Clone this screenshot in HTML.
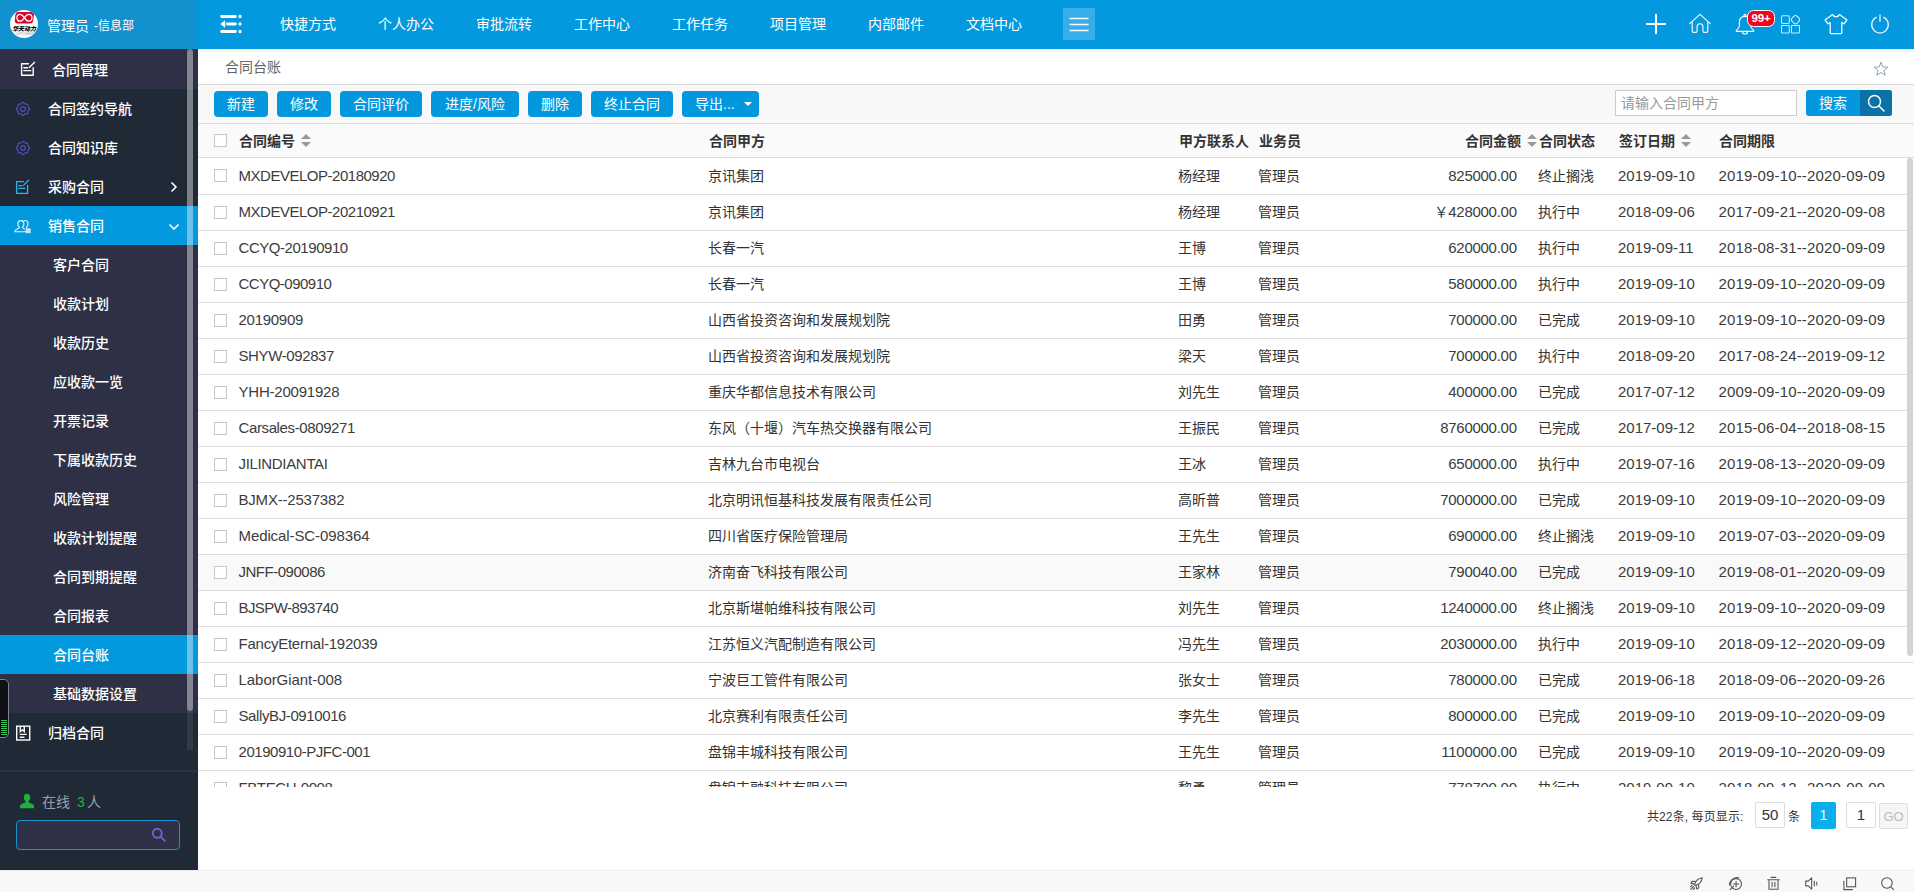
<!DOCTYPE html>
<html lang="zh-CN"><head><meta charset="utf-8"><title>合同台账</title>
<style>
html,body{margin:0;padding:0}
body{width:1914px;height:892px;overflow:hidden;position:relative;background:#fff;
 font-family:"Liberation Sans","Noto Sans CJK SC",sans-serif;font-size:14px;color:#333}
a{text-decoration:none}
i,em,b{font-style:normal;font-weight:normal}
svg{display:block}
#top{position:absolute;left:0;top:0;width:1914px;height:49px;background:#0499de}
#brand{position:absolute;left:0;top:0;width:198px;height:49px;background:#1291cf;color:#fff}
#logo{position:absolute;left:10px;top:10px;width:28px;height:28px;border-radius:50%;background:#fcfcfc;overflow:hidden}
#logo .lg1{position:absolute;left:-11.500px;top:14.600px;width:50px;text-align:center;font-size:12px;line-height:8px;font-weight:900;font-style:italic;color:#000;transform:scale(.5);white-space:nowrap;letter-spacing:-.2px}
#logo .lg2{position:absolute;left:-11px;top:20.500px;width:50px;text-align:center;font-size:12px;line-height:6px;color:#999;transform:scale(.3);white-space:nowrap;letter-spacing:1px}
#brand .u1{position:absolute;left:47px;top:0;line-height:52px;font-size:14px}
#brand .u2{position:absolute;left:94px;top:0;line-height:53px;font-size:12px}
#fold{position:absolute;left:219px;top:14px}
.nv{position:absolute;top:0;line-height:48px;color:#fff;font-size:14px;white-space:nowrap}
#more{position:absolute;left:1063px;top:8px;width:32px;height:32px;background:#36aee9}
.ti{position:absolute;top:12px;width:24px;height:24px}
#badge{position:absolute;left:1747px;top:9.500px;width:26px;height:15px;border:1.500px solid #fff;border-radius:6.500px;background:#f2061c;
 color:#fff;font-size:11.500px;font-weight:bold;line-height:15.500px;text-align:center;letter-spacing:-.2px}

#side{position:absolute;left:0;top:49px;width:198px;height:821px;background:#202a37;overflow:hidden}
.si{position:absolute;left:0;width:198px;height:39px;line-height:40px;color:#fff;font-size:14px;white-space:nowrap;font-weight:500}
.si .tx{position:absolute;left:48px;top:0}
.si.head{height:40px;line-height:42px;background:#2e3045}
.si.head .tx{left:52px}
.si.sub,.si.subact{background:#2e3045}
.si.sub .tx,.si.subact .tx{left:53px}
.si.l1act,.si.subact{background:#0399df}
#sthumb{position:absolute;left:187px;top:0;width:6px;height:662px;background:rgba(245,245,245,.43);border-radius:3px}
#strack{position:absolute;left:187px;top:662px;width:6px;height:39px;background:rgba(255,255,255,.08)}
#batt{position:absolute;left:-1px;top:630px;width:8px;height:57px;border:1px solid #80838c;border-radius:0 5px 5px 0;background:#0f1117}
#batt i{position:absolute;left:1px;top:40px;width:6px;height:16px;background:repeating-linear-gradient(#30c44b 0,#30c44b 1px,transparent 1px,transparent 2px)}
#sline{position:absolute;left:0;top:721px;width:198px;height:2px;background:#2e3045}
#online{position:absolute;left:0;top:745px;width:198px;height:16px;line-height:16px;font-size:14px;color:#98a1ab}
#online span{position:absolute;top:0}
#online .o1{left:42px}#online .o2{left:77px;color:#1db240}#online .o3{left:87px}
#sbox{position:absolute;left:16px;top:771px;width:162px;height:28px;border:1px solid #1b8fd4;border-radius:4px;background:#2e3045}

#main{position:absolute;left:198px;top:49px;width:1716px;height:821px;background:#fff;overflow:hidden}
#main:after{content:"";position:absolute;left:0;top:0;width:1716px;height:3px;background:linear-gradient(rgba(0,0,0,.07),rgba(0,0,0,0))}
#crumb{position:absolute;left:0;top:0;width:1716px;height:35px;border-bottom:1px solid #ddd;line-height:35px;color:#666}
#crumb span{position:absolute;left:27px;top:.800px}
#tool{position:absolute;left:0;top:36px;width:1716px;height:38px;border-bottom:1px solid #ddd;background:#f8f8f8}
.bt{position:absolute;top:6px;height:26px;line-height:26px;background:#0398de;border-radius:4px;color:#fff;font-size:14px;text-align:center;white-space:nowrap}
.caret{position:absolute;left:62px;top:11px;width:0;height:0;border-left:4px solid transparent;border-right:4px solid transparent;border-top:4.500px solid #fff}
#q{position:absolute;left:1417px;top:5px;width:175px;height:24px;border:1px solid #ccc;background:#fff;color:#999;font-size:14px;line-height:24px;padding-left:5px}
#qb{position:absolute;left:1608px;top:5px;width:86px;height:26px;border-radius:3px;overflow:hidden;background:#0398de}
#qb span{position:absolute;left:0;top:0;width:54px;height:26px;line-height:26px;color:#fff;text-align:center;font-size:14px}
#qb b{position:absolute;left:54px;top:0;width:32px;height:26px;background:#0b72a8}
#qb b svg{position:absolute;left:6px;top:3px}

#th{position:absolute;left:0;top:75px;width:1716px;height:33px;border-bottom:1px solid #ddd;background:#fafafa}
.cb{position:absolute;left:16px;top:11px;width:11px;height:11px;border:1px solid #c6c6c6;background:#fff}
#th .cb{top:10px}
.h{position:absolute;top:0;line-height:35px;font-weight:bold;font-size:14px;color:#333;white-space:nowrap}
.so{position:absolute;top:10px;width:10px;height:13px}
.so:before,.so:after{content:"";position:absolute;left:0;width:0;height:0;border-left:5px solid transparent;border-right:5px solid transparent}
.so:before{top:0;border-bottom:5px solid #999}
.so:after{top:8px;border-top:5px solid #999}

#tb{position:absolute;left:0;top:109px;width:1716px;height:629px;overflow:hidden}
.r{position:absolute;left:0;width:1716px;height:36px;border-bottom:1px solid #ddd}
.r .cb{top:12px}
.r.r0 .cb{top:11px}
.r.hov{background:linear-gradient(#f9f9f9,#f9f9f9) no-repeat 0 1px}
.c{position:absolute;top:0;line-height:35px;font-size:14px;color:#333;white-space:nowrap}
.c1{left:40.500px;font-size:15px;letter-spacing:-.48px;color:#3c3c3c}
.c2{left:510px;top:1px}.c3{left:980px;top:1px}.c4{left:1060px;top:1px}
.c5{right:397.300px;font-size:15px;letter-spacing:-.28px;color:#3c3c3c}
.c5 em{font-size:14px;letter-spacing:0}
.c6{left:1340px;top:1px}
.c7{left:1420px;font-size:15px;color:#3c3c3c}
.c8{left:1520.500px;font-size:15px;letter-spacing:.15px;color:#3c3c3c}
#vthumb{position:absolute;left:1709px;top:0;width:7px;height:498px;background:#fff}
#vthumb:after{content:"";position:absolute;left:0;top:0;width:6px;height:498px;border-radius:3px;background:#d3d3d3}

#pg{position:absolute;left:0;top:753px;width:1716px;height:27px;font-size:12px;color:#333}
#pg span{position:absolute;top:0;line-height:31px;white-space:nowrap}
.pt{left:1449px;letter-spacing:.1px}
.pb{height:24px;border:1px solid #ddd;border-radius:2px;background:#fff;text-align:center;font-size:15px;line-height:24px!important}
.pu{left:1590px}
.pc{left:1613px;width:25px;height:27px;background:#0aaeeb;border-radius:2px;color:#fff;text-align:center;font-size:14px;line-height:27px!important}
.go{left:1681px;top:1px!important;width:27px;height:24px;border:1px solid #ddd;border-radius:2px;background:#f5f5f5;color:#bbb;text-align:center;font-size:13px;line-height:25px!important}

#foot{position:absolute;left:0;top:870px;width:1914px;height:21px;border-top:1px solid #eee;background:#f8f8f8}
.fi{position:absolute;top:4.500px;width:15px;height:15px}
.fi svg{width:15px;height:15px}
</style></head><body>
<div id="top">
<div id="brand"><div id="logo"><svg width="28" height="28" viewBox="0 0 28 28" style="position:absolute;left:0;top:0"><path d="M8.2 1.9h13.2a2.6 2.6 0 0 1 2.6 3l-.9 6a2.9 2.9 0 0 1-2.9 2.5H7.4a2.6 2.6 0 0 1-2.6-3l.6-6A2.9 2.9 0 0 1 8.2 1.900z" fill="#dc0426"/><path d="M14.4 7.6c-1.500 2.400-2.600 3.600-4.300 3.600a3.200 3.400 0 0 1 0-6.800c1.700 0 2.800 1.200 4.300 3.200zm0 0c1.500-2 2.700-3.200 4.400-3.200a3.200 3.400 0 0 1 0 6.800c-1.700 0-2.900-1.200-4.400-3.600z" fill="none" stroke="#fff" stroke-width="1.25"/></svg><span class="lg1">华天动力</span><span class="lg2">UPOWER</span></div><span class="u1">管理员</span><span class="u2">-信息部</span></div>
<div id="fold"><svg width="24" height="20" viewBox="0 0 24 20"><g stroke="#fff" stroke-linecap="round" fill="none"><path d="M2.600 2.500H16.400M8.400 10H16.400M2.600 17.500H16.400" stroke-width="2.800"/><path d="M21 2.500h.01M21 10h.01M21 17.500h.01" stroke-width="3.300"/></g><path d="M1.600 10L6 6.500V13.500z" fill="#fff" stroke="#fff" stroke-width=".4" stroke-linejoin="round"/></svg></div>
<a class="nv" style="left:280px">快捷方式</a>
<a class="nv" style="left:378px">个人办公</a>
<a class="nv" style="left:476px">审批流转</a>
<a class="nv" style="left:574px">工作中心</a>
<a class="nv" style="left:672px">工作任务</a>
<a class="nv" style="left:770px">项目管理</a>
<a class="nv" style="left:868px">内部邮件</a>
<a class="nv" style="left:966px">文档中心</a>
<div id="more"><svg width="32" height="32" viewBox="0 0 32 32"><path d="M6.500 10.500H25.500M6.500 16.500H25.500M6.500 22.500H25.500" stroke="#fff" stroke-width="1.700" fill="none"/></svg></div>
<div class="ti" style="left:1644px"><svg width="24" height="24" viewBox="0 0 24 24"><path d="M2 12H22M12 2V22" stroke="#fff" stroke-width="2" fill="none"/></svg></div>
<div class="ti" style="left:1688px"><svg width="24" height="24" viewBox="0 0 24 24"><g fill="none" stroke="#fff" stroke-width="1.100" stroke-linejoin="round" stroke-linecap="round"><path d="M1.700 11.600L12 2.300L22.300 11.600"/><path d="M4.200 10.300V19a1.400 1.400 0 0 0 1.400 1.400h2.100a1.400 1.400 0 0 0 1.400-1.400v-4.400a2.900 2.900 0 0 1 5.800 0V19a1.400 1.400 0 0 0 1.400 1.400h2.100a1.400 1.400 0 0 0 1.400-1.400V10.300"/></g></svg></div>
<div class="ti" style="left:1733px"><svg width="24" height="24" viewBox="0 0 24 24"><g fill="none" stroke="#fff" stroke-width="1.100" stroke-linejoin="round"><circle cx="12" cy="3.300" r="1.100"/><path d="M12 4.400c-3.600 0-5.600 2.700-5.600 6.200v3.200c0 1.700-1.200 3.200-3 4.600c-.4.300-.3 1 .4 1h16.400c.7 0 .8-.7.400-1c-1.800-1.400-3-2.900-3-4.600v-3.200c0-3.500-2-6.200-5.600-6.200z"/><path d="M9.300 19.600c.3 1.500 1.300 2.400 2.700 2.400s2.400-.9 2.700-2.400"/></g></svg></div>
<div id="badge">99+</div>
<div class="ti" style="left:1779px"><svg width="24" height="24" viewBox="0 0 24 24"><g fill="none" stroke="#fff" stroke-opacity=".8" stroke-width="1.050"><rect x="2.500" y="3.800" width="7.800" height="7.600" rx="1.200"/><rect x="2.500" y="13.500" width="7.800" height="7.400" rx=".7"/><rect x="12.500" y="13.500" width="8" height="7.400" rx=".7"/><rect x="12.900" y="4.100" width="7.200" height="7.200" rx="2.500" transform="rotate(45 16.500 7.700)"/></g></svg></div>
<div class="ti" style="left:1823px"><svg width="24" height="24" viewBox="0 0 24 24" style="margin-left:.5px"><path d="M8.600 2.600c.6 1.500 1.800 2.200 3.400 2.200s2.800-.7 3.400-2.200l7.600 5.300l-3 3.900l-2.200-1.300v10.100a.9.9 0 0 1-.9.900H7.100a.9.9 0 0 1-.9-.9V10.500L4 11.800L1 7.900z" fill="none" stroke="#fff" stroke-width="1.250" stroke-linejoin="round"/></svg></div>
<div class="ti" style="left:1868px"><svg width="24" height="24" viewBox="0 0 24 24"><g fill="none" stroke="#fff" stroke-width="1.400" stroke-linecap="round" stroke-opacity=".85"><path d="M8.200 5.300a8.300 8.300 0 1 0 7.600 0"/><path d="M12 3V9.400"/></g></svg></div>
</div>
<div id="side">
<div class="si head" style="top:0px"><svg width="18" height="18" viewBox="0 0 18 18" style="position:absolute;left:18px;top:11px"><g fill="none" stroke="#fff" stroke-width="1.400" stroke-linecap="round" stroke-linejoin="round"><path d="M10.500 3.700H3.600V15.300H15.200V7.600"/><path d="M5.800 7.700H9.500M5.800 10.600H12.800"/><path d="M11.300 7.500L16.600 2.200"/></g></svg><span class="tx">合同管理</span></div>
<div class="si l1" style="top:40px"><svg width="18" height="18" viewBox="0 0 18 18" style="position:absolute;left:14px;top:11px"><g fill="none" stroke="#5b53cf" stroke-width="1.050"><path d="M8.04 3.04Q9.00 1.70 9.96 3.04Q10.91 4.38 12.54 4.11Q14.16 3.84 13.89 5.46Q13.62 7.09 14.96 8.04Q16.30 9.00 14.96 9.96Q13.62 10.91 13.89 12.54Q14.16 14.16 12.54 13.89Q10.91 13.62 9.96 14.96Q9.00 16.30 8.04 14.96Q7.09 13.62 5.46 13.89Q3.84 14.16 4.11 12.54Q4.38 10.91 3.04 9.96Q1.70 9.00 3.04 8.04Q4.38 7.09 4.11 5.46Q3.84 3.84 5.46 4.11Q7.09 4.38 8.04 3.04z"/><circle cx="9" cy="9" r="2.300"/></g></svg><span class="tx">合同签约导航</span></div>
<div class="si l1" style="top:79px"><svg width="18" height="18" viewBox="0 0 18 18" style="position:absolute;left:14px;top:11px"><g fill="none" stroke="#5b53cf" stroke-width="1.050"><path d="M8.04 3.04Q9.00 1.70 9.96 3.04Q10.91 4.38 12.54 4.11Q14.16 3.84 13.89 5.46Q13.62 7.09 14.96 8.04Q16.30 9.00 14.96 9.96Q13.62 10.91 13.89 12.54Q14.16 14.16 12.54 13.89Q10.91 13.62 9.96 14.96Q9.00 16.30 8.04 14.96Q7.09 13.62 5.46 13.89Q3.84 14.16 4.11 12.54Q4.38 10.91 3.04 9.96Q1.70 9.00 3.04 8.04Q4.38 7.09 4.11 5.46Q3.84 3.84 5.46 4.11Q7.09 4.38 8.04 3.04z"/><circle cx="9" cy="9" r="2.300"/></g></svg><span class="tx">合同知识库</span></div>
<div class="si l1" style="top:118px"><svg width="18" height="18" viewBox="0 0 18 18" style="position:absolute;left:13px;top:11px"><g fill="none" stroke="#2db4e8" stroke-width="1.300" stroke-linecap="round" stroke-linejoin="round"><path d="M10.500 3.700H3.600V15.300H14.600V7.300"/><path d="M5.800 7.600H8.800M5.800 10.300H11.800"/><path d="M10.600 7.300L15.600 2.300"/></g></svg><span class="tx">采购合同</span><svg width="8" height="12" viewBox="0 0 8 12" style="position:absolute;left:170px;top:14px"><path d="M1.500 1.500L6 6L1.500 10.500" fill="none" stroke="#fff" stroke-width="1.600"/></svg></div>
<div class="si l1act" style="top:157px"><svg width="18" height="16" viewBox="0 0 18 16" style="position:absolute;left:14px;top:13px"><g fill="none" stroke="#e8f4fb" stroke-width="1.150" stroke-linejoin="round"><path d="M6.900 1.600c-2 0-3 1.500-3 3.300c0 1.500.6 2.700 1.500 3.400c-.2 1-1.200 1.400-2.600 1.900c-1.300.5-1.800 1.300-1.800 2.500h11"/><path d="M6.900 1.600c2 0 3 1.500 3 3.300c0 1.500-.6 2.700-1.500 3.400c.2 1 1.200 1.400 2.600 1.900"/><path d="M9.400 1.900c.5-.3 1-.4 1.600-.4c2 0 3 1.500 3 3.300c0 1.500-.6 2.700-1.500 3.400c.1.500.4.900.9 1.100"/></g><rect x="11.700" y="9.400" width="5" height="4.800" fill="#e8f4fb" fill-opacity=".85"/></svg><span class="tx">销售合同</span><svg width="12" height="8" viewBox="0 0 12 8" style="position:absolute;left:168px;top:17px"><path d="M1.500 1.500L6 6L10.500 1.500" fill="none" stroke="#fff" stroke-width="1.600"/></svg></div>
<div class="si sub" style="top:196px"><span class="tx">客户合同</span></div>
<div class="si sub" style="top:235px"><span class="tx">收款计划</span></div>
<div class="si sub" style="top:274px"><span class="tx">收款历史</span></div>
<div class="si sub" style="top:313px"><span class="tx">应收款一览</span></div>
<div class="si sub" style="top:352px"><span class="tx">开票记录</span></div>
<div class="si sub" style="top:391px"><span class="tx">下属收款历史</span></div>
<div class="si sub" style="top:430px"><span class="tx">风险管理</span></div>
<div class="si sub" style="top:469px"><span class="tx">收款计划提醒</span></div>
<div class="si sub" style="top:508px"><span class="tx">合同到期提醒</span></div>
<div class="si sub" style="top:547px"><span class="tx">合同报表</span></div>
<div class="si subact" style="top:586px"><span class="tx">合同台账</span></div>
<div class="si sub" style="top:625px"><span class="tx">基础数据设置</span></div>
<div class="si l1" style="top:664px"><svg width="18" height="18" viewBox="0 0 18 18" style="position:absolute;left:14px;top:11px"><g fill="none" stroke="#fff" stroke-width="1.400" stroke-linejoin="miter"><rect x="2.700" y="2.200" width="13" height="13.800"/><path d="M6.300 2.200V7.500L8.300 5.900L10.300 7.500V2.200"/><path d="M5.800 10.400H12.600M5.800 13.200H10.400"/></g></svg><span class="tx">归档合同</span></div>
<div id="sthumb"></div><div id="strack"></div>
<div id="batt"><i></i></div>
<div id="sline"></div>
<div id="online"><svg width="16" height="16" viewBox="0 0 16 16" style="position:absolute;left:19px;top:-1px"><path d="M8 .8c2 0 3.200 1.500 3.200 3.600c0 1.600-.7 3-1.700 3.700v.9c.3.700 1.600 1.100 3.200 1.700c1.600.6 2.300 1.500 2.300 3v1.500H1v-1.500c0-1.500.7-2.400 2.300-3c1.600-.6 2.900-1 3.200-1.700v-.9c-1-.7-1.700-2.100-1.700-3.700c0-2.100 1.200-3.600 3.200-3.600z" fill="#1db240"/></svg><span class="o1">在线</span><span class="o2">3</span><span class="o3">人</span></div>
<div id="sbox"><svg width="16" height="16" viewBox="0 0 16 16" style="position:absolute;left:134px;top:6px"><g fill="none" stroke="#6d62d6" stroke-width="1.900"><circle cx="6.300" cy="6.300" r="4.500"/><path d="M9.600 9.600L13.800 13.800" stroke-linecap="round"/></g></svg></div>
</div>
<div id="main">
<div id="crumb"><span>合同台账</span><svg width="16" height="16" viewBox="0 0 16 16" style="position:absolute;left:1675px;top:12px"><path d="M8.00 1.20L9.82 5.89L14.85 6.18L10.95 9.36L12.23 14.22L8.00 11.50L3.77 14.22L5.05 9.36L1.15 6.18L6.18 5.89z" fill="none" stroke="#8fa1b8" stroke-width="1" stroke-linejoin="miter"/></svg></div>
<div id="tool">
<a class="bt" style="left:16px;width:54px">新建</a>
<a class="bt" style="left:79px;width:54px">修改</a>
<a class="bt" style="left:142px;width:82px">合同评价</a>
<a class="bt" style="left:233px;width:88px">进度/风险</a>
<a class="bt" style="left:330px;width:54px">删除</a>
<a class="bt" style="left:393px;width:82px">终止合同</a>
<a class="bt" style="left:484px;width:77px;text-align:left"><span style="margin-left:13px">导出...</span><i class="caret"></i></a>
<div id="q">请输入合同甲方</div>
<div id="qb"><span>搜索</span><b><svg width="20" height="20" viewBox="0 0 20 20"><g fill="none" stroke="#fff" stroke-width="1.500"><circle cx="8.500" cy="8.500" r="6"/><path d="M13 13L18 18" stroke-linecap="round"/></g></svg></b></div>
</div>
<div id="th">
<i class="cb"></i>
<span class="h" style="left:41px">合同编号</span><i class="so" style="left:103px"></i>
<span class="h" style="left:511px">合同甲方</span>
<span class="h" style="left:981px">甲方联系人</span>
<span class="h" style="left:1061px">业务员</span>
<span class="h hr" style="right:393px">合同金额</span><i class="so" style="left:1329px"></i>
<span class="h" style="left:1341px">合同状态</span>
<span class="h" style="left:1421px">签订日期</span><i class="so" style="left:1483px"></i>
<span class="h" style="left:1521px">合同期限</span>
</div>
<div id="tb">
<div class="r r0" style="top:0px"><i class="cb"></i><span class="c c1" style="letter-spacing:-0.48px">MXDEVELOP-20180920</span><span class="c c2">京讯集团</span><span class="c c3">杨经理</span><span class="c c4">管理员</span><span class="c c5">825000.00</span><span class="c c6">终止搁浅</span><span class="c c7">2019-09-10</span><span class="c c8">2019-09-10--2020-09-09</span></div>
<div class="r" style="top:36px"><i class="cb"></i><span class="c c1" style="letter-spacing:-0.48px">MXDEVELOP-20210921</span><span class="c c2">京讯集团</span><span class="c c3">杨经理</span><span class="c c4">管理员</span><span class="c c5"><em>￥</em>428000.00</span><span class="c c6">执行中</span><span class="c c7">2018-09-06</span><span class="c c8">2017-09-21--2020-09-08</span></div>
<div class="r" style="top:72px"><i class="cb"></i><span class="c c1" style="letter-spacing:-0.45px">CCYQ-20190910</span><span class="c c2">长春一汽</span><span class="c c3">王博</span><span class="c c4">管理员</span><span class="c c5">620000.00</span><span class="c c6">执行中</span><span class="c c7">2019-09-11</span><span class="c c8">2018-08-31--2020-09-09</span></div>
<div class="r" style="top:108px"><i class="cb"></i><span class="c c1" style="letter-spacing:-0.50px">CCYQ-090910</span><span class="c c2">长春一汽</span><span class="c c3">王博</span><span class="c c4">管理员</span><span class="c c5">580000.00</span><span class="c c6">执行中</span><span class="c c7">2019-09-10</span><span class="c c8">2019-09-10--2020-09-09</span></div>
<div class="r" style="top:144px"><i class="cb"></i><span class="c c1" style="letter-spacing:-0.27px">20190909</span><span class="c c2">山西省投资咨询和发展规划院</span><span class="c c3">田勇</span><span class="c c4">管理员</span><span class="c c5">700000.00</span><span class="c c6">已完成</span><span class="c c7">2019-09-10</span><span class="c c8">2019-09-10--2020-09-09</span></div>
<div class="r" style="top:180px"><i class="cb"></i><span class="c c1" style="letter-spacing:-0.39px">SHYW-092837</span><span class="c c2">山西省投资咨询和发展规划院</span><span class="c c3">梁天</span><span class="c c4">管理员</span><span class="c c5">700000.00</span><span class="c c6">执行中</span><span class="c c7">2018-09-20</span><span class="c c8">2017-08-24--2019-09-12</span></div>
<div class="r" style="top:216px"><i class="cb"></i><span class="c c1" style="letter-spacing:-0.21px">YHH-20091928</span><span class="c c2">重庆华都信息技术有限公司</span><span class="c c3">刘先生</span><span class="c c4">管理员</span><span class="c c5">400000.00</span><span class="c c6">已完成</span><span class="c c7">2017-07-12</span><span class="c c8">2009-09-10--2020-09-09</span></div>
<div class="r" style="top:252px"><i class="cb"></i><span class="c c1" style="letter-spacing:-0.38px">Carsales-0809271</span><span class="c c2">东风（十堰）汽车热交换器有限公司</span><span class="c c3">王振民</span><span class="c c4">管理员</span><span class="c c5">8760000.00</span><span class="c c6">已完成</span><span class="c c7">2017-09-12</span><span class="c c8">2015-06-04--2018-08-15</span></div>
<div class="r" style="top:288px"><i class="cb"></i><span class="c c1" style="letter-spacing:-0.33px">JILINDIANTAI</span><span class="c c2">吉林九台市电视台</span><span class="c c3">王冰</span><span class="c c4">管理员</span><span class="c c5">650000.00</span><span class="c c6">执行中</span><span class="c c7">2019-07-16</span><span class="c c8">2019-08-13--2020-09-09</span></div>
<div class="r" style="top:324px"><i class="cb"></i><span class="c c1" style="letter-spacing:-0.20px">BJMX--2537382</span><span class="c c2">北京明讯恒基科技发展有限责任公司</span><span class="c c3">高昕普</span><span class="c c4">管理员</span><span class="c c5">7000000.00</span><span class="c c6">已完成</span><span class="c c7">2019-09-10</span><span class="c c8">2019-09-10--2020-09-09</span></div>
<div class="r" style="top:360px"><i class="cb"></i><span class="c c1" style="letter-spacing:-0.10px">Medical-SC-098364</span><span class="c c2">四川省医疗保险管理局</span><span class="c c3">王先生</span><span class="c c4">管理员</span><span class="c c5">690000.00</span><span class="c c6">终止搁浅</span><span class="c c7">2019-09-10</span><span class="c c8">2019-07-03--2020-09-09</span></div>
<div class="r hov" style="top:396px"><i class="cb"></i><span class="c c1" style="letter-spacing:-0.48px">JNFF-090086</span><span class="c c2">济南奋飞科技有限公司</span><span class="c c3">王家林</span><span class="c c4">管理员</span><span class="c c5">790040.00</span><span class="c c6">已完成</span><span class="c c7">2019-09-10</span><span class="c c8">2019-08-01--2020-09-09</span></div>
<div class="r" style="top:432px"><i class="cb"></i><span class="c c1" style="letter-spacing:-0.57px">BJSPW-893740</span><span class="c c2">北京斯堪帕维科技有限公司</span><span class="c c3">刘先生</span><span class="c c4">管理员</span><span class="c c5">1240000.00</span><span class="c c6">终止搁浅</span><span class="c c7">2019-09-10</span><span class="c c8">2019-09-10--2020-09-09</span></div>
<div class="r" style="top:468px"><i class="cb"></i><span class="c c1" style="letter-spacing:-0.24px">FancyEternal-192039</span><span class="c c2">江苏恒义汽配制造有限公司</span><span class="c c3">冯先生</span><span class="c c4">管理员</span><span class="c c5">2030000.00</span><span class="c c6">执行中</span><span class="c c7">2019-09-10</span><span class="c c8">2018-09-12--2020-09-09</span></div>
<div class="r" style="top:504px"><i class="cb"></i><span class="c c1" style="letter-spacing:-0.05px">LaborGiant-008</span><span class="c c2">宁波巨工管件有限公司</span><span class="c c3">张女士</span><span class="c c4">管理员</span><span class="c c5">780000.00</span><span class="c c6">已完成</span><span class="c c7">2019-06-18</span><span class="c c8">2018-09-06--2020-09-26</span></div>
<div class="r" style="top:540px"><i class="cb"></i><span class="c c1" style="letter-spacing:-0.39px">SallyBJ-0910016</span><span class="c c2">北京赛利有限责任公司</span><span class="c c3">李先生</span><span class="c c4">管理员</span><span class="c c5">800000.00</span><span class="c c6">已完成</span><span class="c c7">2019-09-10</span><span class="c c8">2019-09-10--2020-09-09</span></div>
<div class="r" style="top:576px"><i class="cb"></i><span class="c c1" style="letter-spacing:-0.45px">20190910-PJFC-001</span><span class="c c2">盘锦丰城科技有限公司</span><span class="c c3">王先生</span><span class="c c4">管理员</span><span class="c c5">1100000.00</span><span class="c c6">已完成</span><span class="c c7">2019-09-10</span><span class="c c8">2019-09-10--2020-09-09</span></div>
<div class="r" style="top:612px"><i class="cb"></i><span class="c c1" style="letter-spacing:-0.40px">FBTECH-0008</span><span class="c c2">盘锦丰融科技有限公司</span><span class="c c3">黎勇</span><span class="c c4">管理员</span><span class="c c5">778700.00</span><span class="c c6">执行中</span><span class="c c7">2019-09-10</span><span class="c c8">2018-09-12--2020-09-09</span></div>
<div id="vthumb"></div>
</div>
<div id="pg"><span class="pt">共22条, 每页显示:</span><span class="pb" style="left:1557px;width:28px">50</span><span class="pu">条</span><span class="pc">1</span><span class="pb" style="left:1648px;width:28px">1</span><span class="go">GO</span></div>
</div>
<div id="foot">
<div class="fi" style="left:1689px"><svg width="16" height="16" viewBox="0 0 16 16"><g fill="none" stroke="#555" stroke-width="1.150" stroke-linejoin="round" stroke-linecap="round"><path d="M6 9.800C6.500 6 9.500 2.500 14.200 1.800C13.500 6.500 10 9.500 6.200 10z"/><path d="M7.200 5.800L3.500 5.600L2 7.600L5.500 8.400M10.200 8.800L10.400 12.500L8.400 14L7.600 10.500"/><path d="M4.800 11.200L1.800 14.200M3.300 9.800L1.600 11.500M6.200 12.700L4.500 14.400"/></g></svg></div>
<div class="fi" style="left:1728px"><svg width="16" height="16" viewBox="0 0 16 16"><g fill="none" stroke="#555" stroke-width="1.150" stroke-linecap="round"><circle cx="8.600" cy="8.600" r="5.800"/><path d="M8.600 5.800V11.400M5.800 8.600H11.400"/><path d="M1.500 9.500C1.500 4.500 6 1.200 11.500 1.800"/><path d="M2.200 14.500L6 10.800"/></g></svg></div>
<div class="fi" style="left:1766px"><svg width="16" height="16" viewBox="0 0 16 16"><g fill="none" stroke="#555" stroke-width="1.150" stroke-linecap="round"><path d="M5.500 1.500H10.500M1.800 4H14.200M3.200 4V14.200H12.800V4M6.500 6.800V11.500M9.500 6.800V11.500"/></g></svg></div>
<div class="fi" style="left:1804px"><svg width="16" height="16" viewBox="0 0 16 16"><g fill="none" stroke="#555" stroke-width="1.150" stroke-linejoin="round" stroke-linecap="round"><path d="M1.800 5.500H4.500L8.200 2V14L4.500 10.500H1.800z"/><path d="M11 5.500V10.500M13.600 6.500V9.500"/></g></svg></div>
<div class="fi" style="left:1842px"><svg width="16" height="16" viewBox="0 0 16 16"><g fill="none" stroke="#555" stroke-width="1.150"><rect x="5" y="2" width="9.500" height="9.500"/><path d="M2 5V14.500H11.500"/></g></svg></div>
<div class="fi" style="left:1880px"><svg width="16" height="16" viewBox="0 0 16 16"><g fill="none" stroke="#555" stroke-width="1.150" stroke-linecap="round"><circle cx="7.400" cy="7.400" r="5.600"/><path d="M11.600 11.600L14.500 14.500"/></g></svg></div>
</div>
</body></html>
